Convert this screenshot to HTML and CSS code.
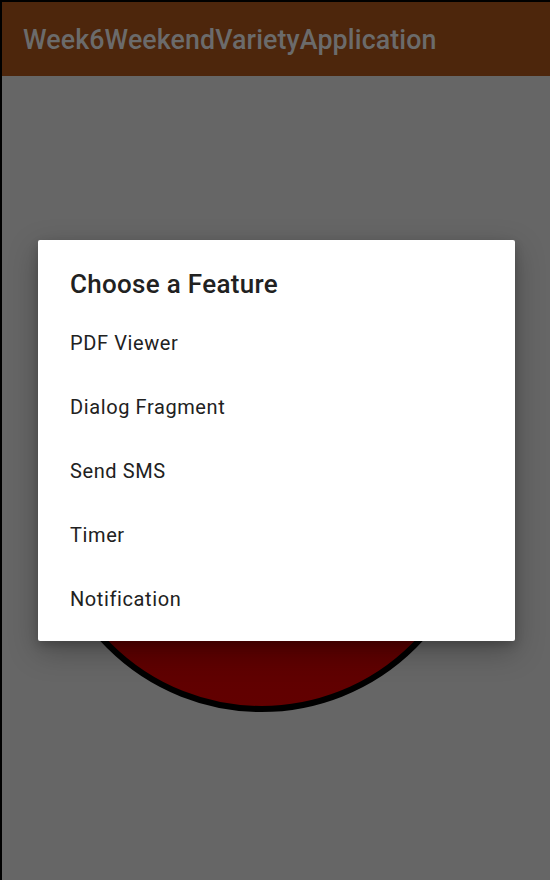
FILE: index.html
```html
<!DOCTYPE html>
<html>
<head>
<meta charset="utf-8">
<link rel="stylesheet" href="styles.css">
</head>
<body>
<div class="screen">
  <div class="frame">
    <header class="appbar">
      <span class="appbar-title">Week6WeekendVarietyApplication</span>
    </header>
    <main class="content">
      <div class="circle"></div>
    </main>
  </div>
  <div class="dialog">
    <h2 class="dialog-title">Choose a Feature</h2>
    <ul class="dialog-list">
      <li class="dialog-item">PDF Viewer</li>
      <li class="dialog-item">Dialog Fragment</li>
      <li class="dialog-item">Send SMS</li>
      <li class="dialog-item">Timer</li>
      <li class="dialog-item">Notification</li>
    </ul>
  </div>
</div>
</body>
</html>
```
FILE: styles.css
```css
* { box-sizing: border-box; }
html, body { margin: 0; padding: 0; }
body {
  width: 550px;
  height: 880px;
  overflow: hidden;
  background: #000;
  font-family: Roboto, "Noto Sans", sans-serif;
}
.screen {
  position: relative;
  width: 550px;
  height: 880px;
  padding: 2px 0 0 2px;
  background: #000;
}
.frame {
  display: flex;
  flex-direction: column;
  height: 100%;
  background: #666666;
}
.appbar {
  height: 74px;
  flex: none;
  background: #4d260c;
  display: flex;
  align-items: center;
  padding-left: 21px;
}
.appbar-title {
  color: #6b6b6b;
  font-size: 26.8px;
  font-weight: 500;
  letter-spacing: 0.1px;
  margin-top: 1px;
}
.content {
  flex: 1;
  padding: 199px 0 0 41px;
}
.circle {
  width: 437px;
  height: 437px;
  border-radius: 50%;
  border: 6px solid #000;
  background: linear-gradient(180deg, #480000 0%, #560000 60%, #620000 100%);
}
.dialog {
  position: absolute;
  left: 38px;
  top: 240px;
  width: 477px;
  height: 401px;
  background: #fff;
  border-radius: 2px;
  box-shadow: 0 10px 30px rgba(0,0,0,0.28), 0 4px 10px rgba(0,0,0,0.18);
  padding: 25px 0 0 32px;
}
.dialog-title {
  margin: 0;
  font-size: 26px;
  font-weight: 500;
  letter-spacing: 0.3px;
  color: #212121;
  line-height: 38px;
}
.dialog-list {
  list-style: none;
  margin: 8px 0 0;
  padding: 0;
}
.dialog-item {
  height: 64px;
  display: flex;
  align-items: center;
  font-size: 20px;
  letter-spacing: 0.6px;
  color: #212121;
}
```
